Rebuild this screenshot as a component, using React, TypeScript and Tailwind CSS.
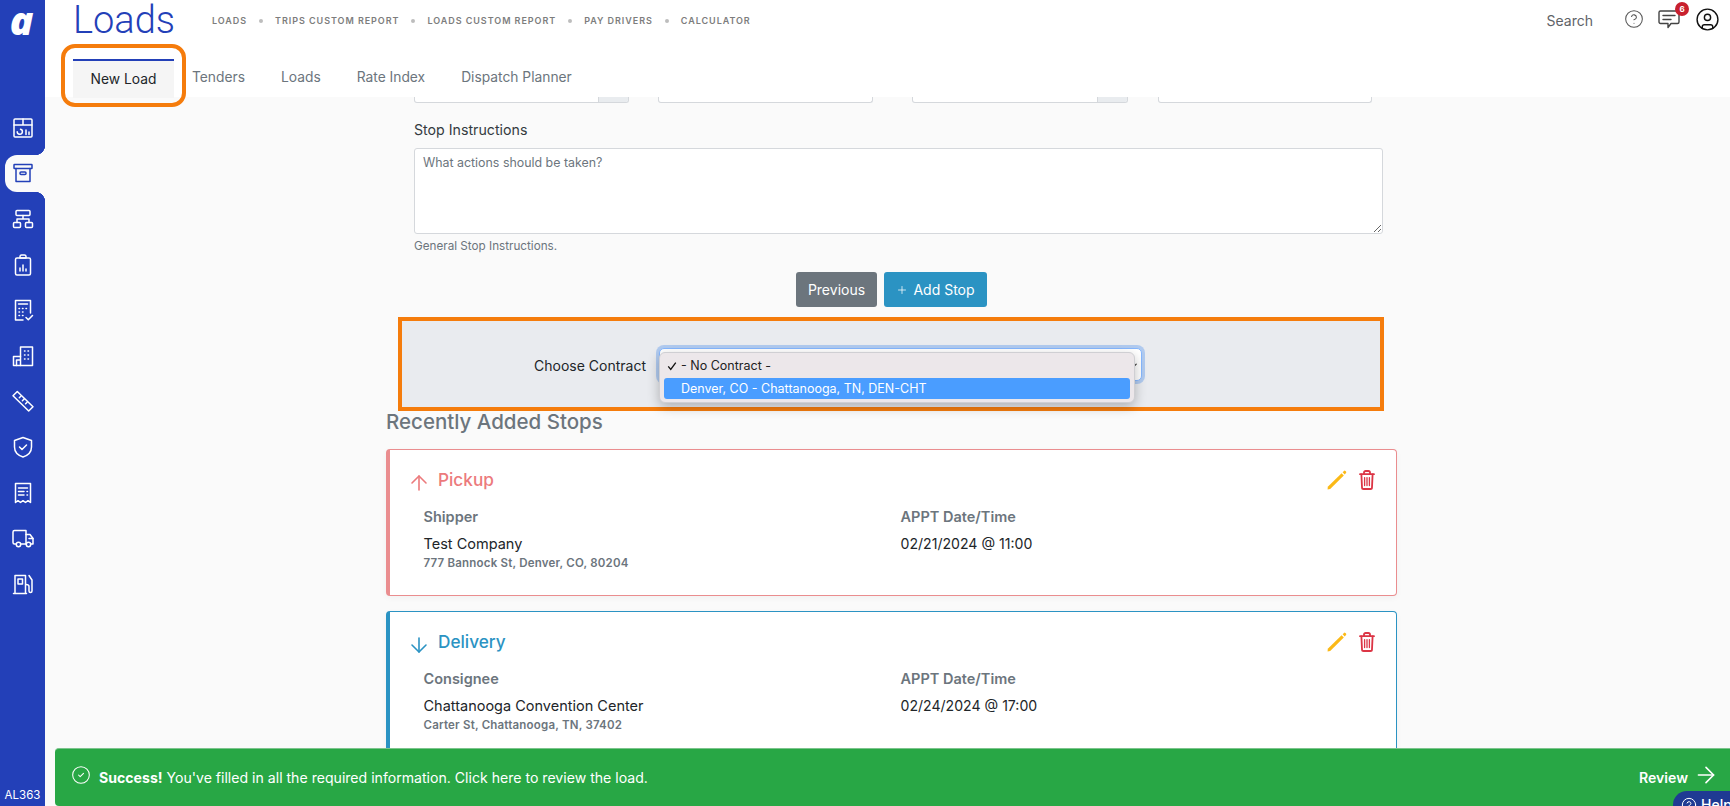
import { ArrowDown, ArrowRight, ArrowUp, ChevronDown, CircleCheck, CircleHelp, CircleUser, Plus } from "lucide-react";
import type { ReactNode } from "react";

const crumbs = ["LOADS", "TRIPS CUSTOM REPORT", "LOADS CUSTOM REPORT", "PAY DRIVERS", "CALCULATOR"];
const tabs = ["Tenders", "Loads", "Rate Index", "Dispatch Planner"];

const NavSvg = ({ children }: { children: ReactNode }) => (
  <svg viewBox="0 0 24 24" className="h-[24px] w-[24px]" fill="none" stroke="currentColor" strokeWidth="1.5" strokeLinecap="round" strokeLinejoin="round">
    {children}
  </svg>
);

const navIcons: ReactNode[] = [
  <>
    <rect x="3" y="3" width="18" height="18" rx="1" />
    <path d="M3 9h18M12 3v6M9.5 13.2a2.6 2.6 0 1 1-3.3 2.5M15 14v4.5M18 16v2.5" />
  </>,
  <>
    <rect x="3" y="3.5" width="18" height="4" rx="0.5" />
    <path d="M5 7.5V20.5H19V7.5" />
    <rect x="9" y="11" width="6" height="2.6" rx="1" />
  </>,
  <>
    <rect x="5" y="3.5" width="14" height="5" rx="1" />
    <rect x="2.5" y="15.5" width="7" height="5" rx="1" />
    <rect x="14.5" y="15.5" width="7" height="5" rx="1" />
    <path d="M12 8.5V12M6 15.5V12H18V15.5" />
  </>,
  <>
    <rect x="4.5" y="5" width="15" height="17" rx="1.5" />
    <path d="M9 5V3.5A1.5 1.5 0 0 1 10.5 2h3A1.5 1.5 0 0 1 15 3.5V5Z" />
    <path d="M9 18v-3M12 18v-6M15 18v-2" />
  </>,
  <>
    <path d="M12 22H4.5V2.5H19.5V15" />
    <path d="M7.5 6H16.5M8 10.5h.5M11.5 10.5h.5M15 10.5h.5M8 14h.5M11.5 14h.5M8 17.5h.5M11.5 17.5h.5" />
    <path d="m15 19.5 2.3 2.3 4.2-4.3" />
  </>,
  <>
    <path d="M2.5 21.5V12.5H9.5V3H21.5V21.5Z" />
    <path d="M5.5 21.5V16H9.5V21.5M9.5 12.5V21.5M13.5 7h.5M17 7h.5M13.5 11h.5M17 11h.5M13.5 15h.5M17 15h.5" />
  </>,
  <>
    <path d="M2 6.8 6.3 2.5 22 17.7 17.7 22Z" />
    <path d="m8.3 8.7 1.5-1.5M11.4 11.7l2-2M14.6 14.8l1.5-1.5" />
  </>,
  <>
    <path d="M12 2.5 20.5 5.5V12C20.5 17 16.5 20.5 12 22 7.5 20.5 3.5 17 3.5 12V5.5Z" />
    <path d="m8.5 12 2.5 2.5 4.5-4.5" />
  </>,
  <>
    <path d="M4.5 21.5V2.5H19.5V21.5L17 19.7 14.5 21.5 12 19.7 9.5 21.5 7 19.7Z" />
    <path d="M7.5 7H16.5M7.5 10.5H13M7.5 14H13M16 10.5h.5M16 14h.5" />
  </>,
  <>
    <path d="M5 18H3.5A1.5 1.5 0 0 1 2 16.5V6A1.5 1.5 0 0 1 3.5 4.5H15V18H10" />
    <path d="M15 8.5H19L22 12.5V18H20M15 18h0" />
    <path d="M18 12.5H22" />
    <circle cx="7.5" cy="18.5" r="2.2" />
    <circle cx="17.5" cy="18.5" r="2.2" />
  </>,
  <>
    <path d="M2.5 21.5H15.5M4 21.5V3.5H14.5V21.5" />
    <path d="M7 7H11.5V12H7Z" />
    <path d="M18 3.5 21 8V19A1.5 1.5 0 0 1 18 19V14.5C18 13 17 12.5 15 12.5" />
  </>,
];

const PencilIcon = () => (
  <svg viewBox="0 0 20 20" className="h-[20px] w-[20px]" fill="#fbb917">
    <path d="M0.8 16.8 14.6 3.2 16.8 5.4 3.2 19 0.6 19.4Z" />
    <path d="M15.6 2.2 17 0.9A1 1 0 0 1 18.4 0.9L19 1.6A1 1 0 0 1 19 3L17.7 4.4Z" />
  </svg>
);

const TrashIcon = () => (
  <svg viewBox="0 0 16 20" className="h-[20px] w-[16px]" fill="none" stroke="#dc3545" strokeWidth="1.8" strokeLinecap="round" strokeLinejoin="round">
    <path d="M1 4.2H15M5 4V2.6A1.6 1.6 0 0 1 6.6 1H9.4A1.6 1.6 0 0 1 11 2.6V4" />
    <path d="M2.4 4.4 3 17.4A1.6 1.6 0 0 0 4.6 19H11.4A1.6 1.6 0 0 0 13 17.4L13.6 4.4" />
    <path d="M5.6 7.6V15.6M8 7.6V15.6M10.4 7.6V15.6" strokeWidth="1.3" />
  </svg>
);

interface StopCardProps {
  type: "pickup" | "delivery";
  title: string;
  partyLabel: string;
  party: string;
  address: string;
  appt: string;
}

const StopCard = ({ type, title, partyLabel, party, address, appt }: StopCardProps) => {
  const pickup = type === "pickup";
  return (
    <div className={`relative h-[147px] rounded-[4px] border border-l-[4px] bg-white pl-[17px] pr-[21px] shadow-[0_2px_6px_rgba(0,0,0,0.04)] ${pickup ? "border-[#ea8d8f]" : "border-[#2b93c3]"}`}>
      <div className="flex h-[59px] items-center">
        <span className={`mt-[7px] ${pickup ? "text-[#ec7a7c]" : "text-[#2b93c3]"}`}>
          {pickup ? <ArrowUp size={24} strokeWidth={1.6} /> : <ArrowDown size={24} strokeWidth={1.6} />}
        </span>
        <h3 className={`ml-[7px] text-[17.2px] font-medium ${pickup ? "text-[#ec7a7c]" : "text-[#2b93c3]"}`}>{title}</h3>
        <div className="ml-auto flex items-center gap-[12px]">
          <PencilIcon />
          <TrashIcon />
        </div>
      </div>
      <div className="ml-[16.5px] mt-[-2px] grid grid-cols-[477px_1fr] text-[14.5px] leading-[20px]">
        <div>
          <div className="font-semibold text-[#6c757d]">{partyLabel}</div>
          <div className="mt-[7px] text-[#212529]">{party}</div>
          <div className="mt-[1px] text-[11.5px] font-semibold leading-[16px] tracking-[0.2px] text-[#6c757d]">{address}</div>
        </div>
        <div>
          <div className="font-semibold text-[#6c757d]">APPT Date/Time</div>
          <div className="mt-[7px] text-[14.1px] text-[#212529]">{appt}</div>
        </div>
      </div>
    </div>
  );
};

export default function App() {
  return (
    <div className="relative flex h-[806px] w-[1730px] overflow-hidden bg-[#fafafa] font-['Inter',sans-serif] text-[14px] text-[#212529]">
      <aside className="flex w-[45px] shrink-0 flex-col bg-[#2340b8] text-white">
        <div className="flex h-[44px] items-center justify-center pb-[5px] pr-[2px] font-['Open_Sans',sans-serif] text-[39px] font-extrabold italic leading-[39px]">a</div>
        <nav className="mt-[61px] flex flex-col">
          {navIcons.map((icon, i) => (
            <div key={i} className="flex h-[45.6px] items-center">
              {i === 1 ? (
                <div className="relative ml-[5px] flex h-[37px] w-[40px] items-center justify-center rounded-l-[12px] bg-[#fafafa] pr-[5px] text-[#2340b8]">
                  <span className="absolute right-0 top-[-10px] h-[10px] w-[10px] bg-[radial-gradient(circle_at_0_0,#2340b8_10px,#fafafa_10.5px)]" />
                  <span className="absolute bottom-[-10px] right-0 h-[10px] w-[10px] bg-[radial-gradient(circle_at_0_100%,#2340b8_10px,#fafafa_10.5px)]" />
                  <NavSvg>{icon}</NavSvg>
                </div>
              ) : (
                <div className="flex w-full justify-center">
                  <NavSvg>{icon}</NavSvg>
                </div>
              )}
            </div>
          ))}
        </nav>
        <div className="mt-auto pb-[3px] text-center text-[11.5px] leading-[16px]">AL363</div>
      </aside>

      <main className="flex min-w-0 flex-1 flex-col">
        <header className="h-[97px] shrink-0 bg-white">
          <div className="flex h-[44px] items-center pl-[28px] pr-[10px]">
            <h1 className="mt-[-4px] w-[139px] font-['Roboto',sans-serif] text-[38px] font-light leading-[40px] text-[#2340b8]">Loads</h1>
            <div className="mt-[-3px] flex items-center text-[9px] font-semibold tracking-[0.95px] text-[#7d7d7d]">
              {crumbs.map((c, i) => (
                <div key={c} className="flex items-center">
                  {i > 0 && <span className="mx-[12px] h-[4px] w-[4px] rounded-full bg-[#bdbdbd]" />}
                  <span>{c}</span>
                </div>
              ))}
            </div>
            <div className="ml-auto mt-[-6px] flex items-center">
              <span className="mt-[2px] text-[14px] text-[#5f6368]">Search</span>
              <CircleHelp size={20} strokeWidth={1.25} className="ml-[31px] text-[#555]" />
              <div className="relative ml-[14px]">
                <svg viewBox="0 0 22 20" className="h-[20px] w-[22px]" fill="none" stroke="#444" strokeWidth="1.4" strokeLinecap="round" strokeLinejoin="round">
                  <path d="M2.5 2H19.5A1.5 1.5 0 0 1 21 3.5V13A1.5 1.5 0 0 1 19.5 14.5H13L10 18.5V14.5H2.5A1.5 1.5 0 0 1 1 13V3.5A1.5 1.5 0 0 1 2.5 2Z" />
                  <path d="M5 6.5H17M5 10.5H13" />
                </svg>
                <span className="absolute right-[-9px] top-[-7px] flex h-[14px] w-[14px] items-center justify-center rounded-full bg-[#c8202e] text-[8px] font-bold text-white">6</span>
              </div>
              <CircleUser size={25} strokeWidth={1.35} className="ml-[15px] text-[#111]" />
            </div>
          </div>
          <div className="flex items-start pl-[28px] text-[13.8px]">
            <div className="relative mt-[15px] flex h-[39px] w-[101px] items-center justify-center border-t-2 border-[#2340b8] bg-[#f5f5f5] text-[#212529]">
              New Load
              <span className="absolute bottom-[-9px] left-[-12px] right-[-12px] top-[-17px] rounded-[14px] border-[4px] border-[#f57c0c]" />
            </div>
            {tabs.map((t) => (
              <div key={t} className="mt-[23px] px-[18px] leading-[20px] text-[#6c757d]">{t}</div>
            ))}
          </div>
        </header>

        <div className="ml-[341px] w-[1011px] min-h-0 flex-1">
          <div className="pl-[28px] pr-[15px]">
            <div className="flex h-[6px]">
              <div className="flex w-[215px] overflow-hidden rounded-b-[3px] border border-t-0 border-[#d5d8dc] bg-white"><div className="ml-auto w-[30px] border-l border-[#d5d8dc] bg-[#e9ecef]" /></div>
              <div className="ml-[29px] w-[215px] rounded-b-[3px] border border-t-0 border-[#d5d8dc] bg-white" />
              <div className="ml-[39px] flex w-[216px] overflow-hidden rounded-b-[3px] border border-t-0 border-[#d5d8dc] bg-white"><div className="ml-auto w-[30px] border-l border-[#d5d8dc] bg-[#e9ecef]" /></div>
              <div className="ml-[30px] w-[214px] rounded-b-[3px] border border-t-0 border-[#d5d8dc] bg-white" />
            </div>
            <label className="mt-[17px] block text-[14.2px] leading-[20px] text-[#343a40]">Stop Instructions</label>
            <textarea
              readOnly
              placeholder="What actions should be taken?"
              className="mt-[8px] block h-[86px] w-[969px] rounded-[3px] border border-[#d5d8dc] bg-white px-[8px] py-[5px] text-[12.4px] leading-[18px] outline-none placeholder:text-[#6c757d]"
            />
            <p className="mt-[4px] text-[11.7px] leading-[16px] text-[#6c757d]">General Stop Instructions.</p>
            <div className="mt-[18px] flex justify-center gap-[7px] pr-[13px]">
              <button className="h-[35px] w-[81px] rounded-[3px] bg-[#6c757d] text-white">Previous</button>
              <button className="flex h-[35px] w-[103px] items-center justify-center gap-[5px] rounded-[3px] bg-[#2b93c3] text-white">
                <Plus size={12} strokeWidth={1.5} />
                Add Stop
              </button>
            </div>
          </div>

          <div className="relative ml-[12px] mt-[10px] flex h-[94px] w-[986px] items-center border-[4px] border-[#f57c0c] bg-[#e9ebef] pl-[132px]">
            <span className="mt-[2px] text-[14px] text-[#212529]">Choose Contract</span>
            <div className="relative ml-[13px] h-[33px] w-[483px] rounded-[5px] border border-[#86b7fe] bg-white shadow-[0_0_0_3px_rgba(120,170,240,0.5)]">
              <ChevronDown size={11} strokeWidth={2.5} className="absolute right-[2px] top-[11px] text-[#333]" />
              <div className="absolute left-[-1px] top-[3px] h-[51px] w-[476px] rounded-[6px] border border-[#cfcfd3] bg-[#ece7ea] px-[4px] text-[12.5px] leading-[20px] shadow-[0_4px_12px_rgba(0,0,0,0.25)]">
                <div className="flex h-[25px] items-center pt-[1px] text-[#222]">
                  <svg viewBox="0 0 12 12" className="ml-[3px] h-[10px] w-[10px]" fill="none" stroke="#111" strokeWidth="1.6"><path d="m1.5 6.5 3 3.5 6-8" /></svg>
                  <span className="ml-[4px]">- No Contract -</span>
                </div>
                <div className="h-[21px] rounded-[3px] bg-[#4a9dff] pl-[17px] leading-[21px] text-white">Denver, CO - Chattanooga, TN, DEN-CHT</div>
              </div>
            </div>
          </div>

          <h2 className="mt-[-1px] h-[24px] text-[20.5px] font-medium leading-[24px] text-[#6c757d]">Recently Added Stops</h2>

          <div className="mt-[15px] flex flex-col gap-[15px]">
            <StopCard type="pickup" title="Pickup" partyLabel="Shipper" party="Test Company" address="777 Bannock St, Denver, CO, 80204" appt="02/21/2024 @ 11:00" />
            <StopCard type="delivery" title="Delivery" partyLabel="Consignee" party="Chattanooga Convention Center" address="Carter St, Chattanooga, TN, 37402" appt="02/24/2024 @ 17:00" />
          </div>
        </div>
      </main>

      <div className="absolute bottom-0 left-[55px] right-0 flex h-[58px] items-center rounded-l-[4px] border-t border-[#7cc48d] bg-[#28a745] pl-[16px] pr-[11px] text-[14.1px] text-white">
        <CircleCheck size={20} strokeWidth={1.25} className="mt-[-6px]" />
        <span className="ml-[8px]"><b className="font-bold">Success!</b> You've filled in all the required information. Click here to review the load.</span>
        <span className="ml-auto font-semibold">Review</span>
        <ArrowRight size={26} strokeWidth={1.5} className="ml-[5px] mt-[-6px]" />
      </div>
      <div className="absolute bottom-0 right-0 flex h-[15px] w-[57px] items-start gap-[4px] overflow-hidden rounded-tl-[14px] bg-[#1f3a93] pl-[8px] pt-[6px] text-[14px] font-medium leading-[16px] text-white">
        <CircleHelp size={16} strokeWidth={1.5} className="shrink-0" />
        Help
      </div>
    </div>
  );
}
